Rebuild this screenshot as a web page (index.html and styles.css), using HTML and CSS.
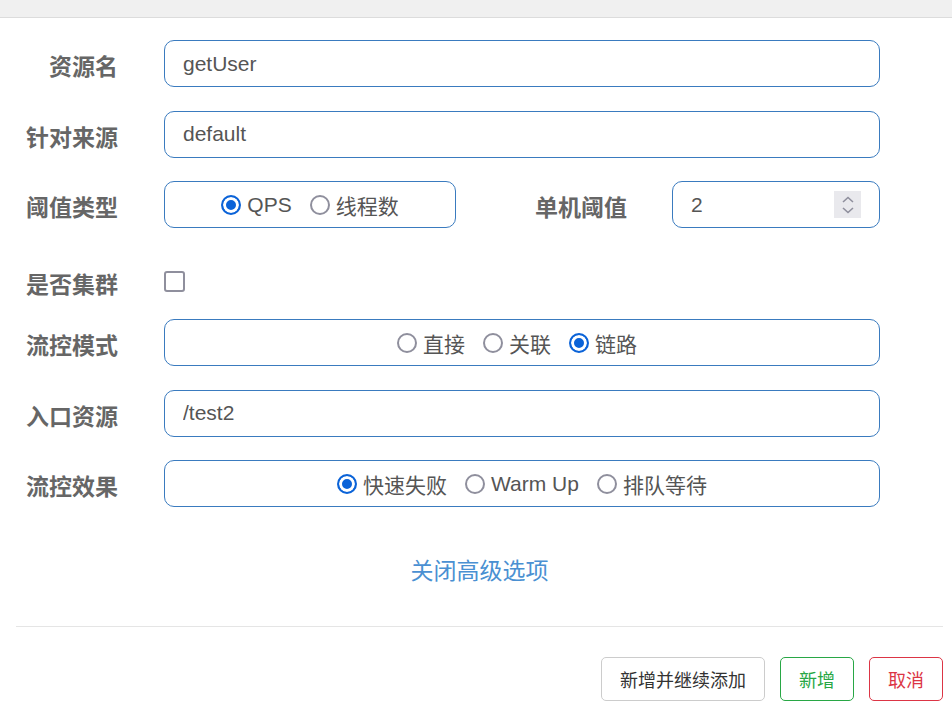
FILE: index.html
```html
<!DOCTYPE html>
<html>
<head>
    <meta charset="utf-8">
    <title>新增流控规则</title>
    <link rel="stylesheet" href="styles.css">
</head>
<body>
    <div class="topbar"></div>

    <form class="rule-form">
        <div class="row">
            <label class="row-label">资源名</label>
            <div class="control">
                <input class="text-input" type="text" value="getUser">
            </div>
        </div>

        <div class="row">
            <label class="row-label">针对来源</label>
            <div class="control">
                <input class="text-input" type="text" value="default">
            </div>
        </div>

        <div class="row">
            <label class="row-label">阈值类型</label>
            <div class="control split">
                <div class="radio-group narrow">
                    <label class="radio"><input type="radio" name="grade" checked> QPS</label>
                    <label class="radio"><input type="radio" name="grade"> 线程数</label>
                </div>
                <label class="row-label inner-label">单机阈值</label>
                <div class="number-input">
                    <input class="number-value" type="text" value="2">
                    <span class="spinner">
                        <svg width="14" height="20" viewBox="0 0 14 20">
                            <path d="M2 7 L7 2.5 L12 7" fill="none" stroke="#8f8f9d" stroke-width="1.6"/>
                            <path d="M2 13 L7 17.5 L12 13" fill="none" stroke="#8f8f9d" stroke-width="1.6"/>
                        </svg>
                    </span>
                </div>
            </div>
        </div>

        <div class="row row-check">
            <label class="row-label">是否集群</label>
            <div class="control">
                <input class="checkbox" type="checkbox">
            </div>
        </div>

        <div class="row">
            <label class="row-label">流控模式</label>
            <div class="control">
                <div class="radio-group shifted">
                    <label class="radio"><input type="radio" name="strategy"> 直接</label>
                    <label class="radio"><input type="radio" name="strategy"> 关联</label>
                    <label class="radio"><input type="radio" name="strategy" checked> 链路</label>
                </div>
            </div>
        </div>

        <div class="row">
            <label class="row-label">入口资源</label>
            <div class="control">
                <input class="text-input" type="text" value="/test2">
            </div>
        </div>

        <div class="row">
            <label class="row-label">流控效果</label>
            <div class="control">
                <div class="radio-group">
                    <label class="radio"><input type="radio" name="behavior" checked> 快速失败</label>
                    <label class="radio"><input type="radio" name="behavior"> Warm Up</label>
                    <label class="radio"><input type="radio" name="behavior"> 排队等待</label>
                </div>
            </div>
        </div>
    </form>

    <div class="toggle">
        <a class="toggle-link">关闭高级选项</a>
    </div>

    <div class="footer">
        <button class="btn btn-default">新增并继续添加</button>
        <button class="btn btn-success">新增</button>
        <button class="btn btn-danger">取消</button>
    </div>
</body>
</html>
```

FILE: styles.css
```css
* {
    box-sizing: border-box;
}
body {
    margin: 0;
    background: #fff;
    font-family: "Liberation Sans", "Noto Sans CJK SC", sans-serif;
    color: #555;
}
.topbar {
    height: 18px;
    background: #f0f0f0;
    border-bottom: 1px solid #dcdcdc;
}
.rule-form {
    padding: 22px 72px 0 0;
}
.row {
    display: grid;
    grid-template-columns: 118px 1fr;
    column-gap: 46px;
    align-items: center;
    height: 47px;
    margin-bottom: 23.5px;
}
.row-check {
    height: 44px;
    padding-top: 11px;
}
.row-label {
    text-align: right;
    font-size: 23px;
    font-weight: bold;
    color: #666;
    white-space: nowrap;
    padding-top: 3px;
}
.control {
    height: 100%;
}
.row-check .control {
    display: flex;
    align-items: center;
}
.text-input,
.radio-group,
.number-input {
    height: 47px;
    border: 1px solid #3a7bbf;
    border-radius: 10px;
    background: #fff;
}
.text-input {
    width: 100%;
    padding: 0 18px;
    font: inherit;
    font-size: 21px;
    color: #555;
    outline: none;
}
.split {
    display: flex;
    align-items: center;
}
.radio-group {
    display: flex;
    align-items: center;
    justify-content: center;
    gap: 18px;
    width: 100%;
}
.radio-group.narrow {
    width: 292px;
    flex: none;
}
.radio-group.shifted {
    padding-right: 10px;
}
.inner-label {
    flex: 1;
    padding-right: 45px;
}
.number-input {
    width: 208px;
    flex: none;
    display: flex;
    align-items: center;
    padding: 0 18px;
}
.number-value {
    flex: 1;
    width: 0;
    border: none;
    outline: none;
    font: inherit;
    font-size: 21px;
    color: #555;
    padding: 0;
}
.spinner {
    width: 27px;
    height: 27px;
    background: #e9e9ed;
    display: flex;
    align-items: center;
    justify-content: center;
}
.radio {
    display: flex;
    align-items: center;
    gap: 6px;
    font-size: 21px;
    color: #555;
    white-space: nowrap;
}
.radio input {
    appearance: none;
    margin: 0;
    width: 20px;
    height: 20px;
    border: 2px solid #8f8f9d;
    border-radius: 50%;
    background: #fff;
}
.radio input:checked {
    border-color: #0b63d8;
    background: #0b63d8;
    box-shadow: inset 0 0 0 3px #fff;
}
.checkbox {
    appearance: none;
    margin: 0;
    width: 21px;
    height: 21px;
    border: 2px solid #8f8f9d;
    border-radius: 3px;
    background: #fff;
}
.toggle {
    margin: 0 9px 0 16px;
    padding: 23px 0 35px;
    text-align: center;
    line-height: 34px;
}
.toggle-link {
    font-size: 23px;
    color: #4a90d2;
    cursor: pointer;
}
.footer {
    margin: 0 9px 0 16px;
    padding-top: 30px;
    border-top: 1px solid #e5e5e5;
    display: flex;
    justify-content: flex-end;
    gap: 15px;
}
.btn {
    height: 44px;
    padding: 0 18px;
    font-family: inherit;
    font-size: 18px;
    background: #fff;
    border: 1px solid #ccc;
    border-radius: 5px;
    color: #333;
    cursor: pointer;
}
.btn-success {
    border-color: #28a745;
    color: #28a745;
}
.btn-danger {
    border-color: #dc3545;
    color: #dc3545;
}
```
